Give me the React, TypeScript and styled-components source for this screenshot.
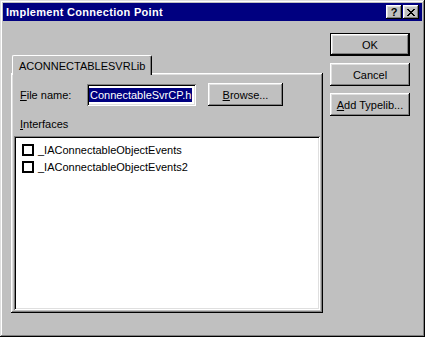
import styled, { createGlobalStyle } from 'styled-components';

const GlobalStyle = createGlobalStyle`
  html, body {
    margin: 0;
    padding: 0;
    background: #c0c0c0;
  }
  body {
    font-family: "Liberation Sans", Arial, sans-serif;
    font-size: 11px;
    color: #000;
  }
`;

const interfaces = ['_IAConnectableObjectEvents', '_IAConnectableObjectEvents2'];

const App = () => {
  return (
    <>
      <GlobalStyle />
      <Window>
        <TitleBar>
          <Title>Implement Connection Point</Title>
          <CaptionButtons>
            <CaptionButton>?</CaptionButton>
            <CaptionButton $close>
              <svg width="8" height="7" viewBox="0 0 8 7" shapeRendering="crispEdges">
                <path
                  d="M0 0h2v1H0zM6 0h2v1H6zM1 1h2v1H1zM5 1h2v1H5zM2 2h4v1H2zM3 3h2v1H3zM2 4h4v1H2zM1 5h2v1H1zM5 5h2v1H5zM0 6h2v1H0zM6 6h2v1H6z"
                  fill="#000"
                />
              </svg>
            </CaptionButton>
          </CaptionButtons>
        </TitleBar>
        <Body>
          <TabArea>
            <TabStrip>
              <Tab>ACONNECTABLESVRLib</Tab>
            </TabStrip>
            <TabPanel>
              <FieldRow>
                <FieldLabel>
                  <u>F</u>ile name:
                </FieldLabel>
                <Edit>
                  <Selection>ConnectableSvrCP.h</Selection>
                </Edit>
                <Button $width={75}>
                  <u>B</u>rowse...
                </Button>
              </FieldRow>
              <GroupLabel>
                <u>I</u>nterfaces
              </GroupLabel>
              <ListBox>
                {interfaces.map(name => (
                  <ListItem key={name}>
                    <CheckBox />
                    <span>{name}</span>
                  </ListItem>
                ))}
              </ListBox>
            </TabPanel>
          </TabArea>
          <ButtonColumn>
            <DefaultButton>OK</DefaultButton>
            <Button $width={80}>Cancel</Button>
            <Button $width={80}>
              <u>A</u>dd Typelib...
            </Button>
          </ButtonColumn>
        </Body>
      </Window>
    </>
  );
};

export default App;

const Window = styled.div`
  width: 425px;
  height: 337px;
  box-sizing: border-box;
  padding: 3px;
  background: #c0c0c0;
  box-shadow: inset -1px -1px #000, inset 1px 1px #dfdfdf, inset -2px -2px #808080,
    inset 2px 2px #fff;
  display: flex;
  flex-direction: column;
`;

const TitleBar = styled.div`
  height: 18px;
  background: #000080;
  display: flex;
  align-items: center;
  justify-content: space-between;
  padding: 0 3px 0 3px;
`;

const Title = styled.span`
  color: #fff;
  font-weight: bold;
  font-size: 11px;
  letter-spacing: 0.3px;
`;

const CaptionButtons = styled.div`
  display: flex;
  gap: 1px;
`;

const CaptionButton = styled.div<{ $close?: boolean }>`
  width: 16px;
  height: 14px;
  box-sizing: border-box;
  background: #c0c0c0;
  box-shadow: inset -1px -1px #000, inset 1px 1px #fff, inset -2px -2px #808080,
    inset 2px 2px #dfdfdf;
  display: flex;
  align-items: center;
  justify-content: center;
  font-weight: bold;
  font-size: 11px;
  line-height: 1;
  padding-top: ${p => (p.$close ? '0' : '1px')};
`;

const Body = styled.div`
  flex: 1;
  display: flex;
  align-items: flex-start;
  padding: 12px 0 0 8px;
`;

const TabArea = styled.div`
  display: flex;
  flex-direction: column;
  margin-top: 22px;
`;

const TabStrip = styled.div`
  display: flex;
  padding-left: 1px;
  margin-bottom: -2px;
  position: relative;
  z-index: 1;
`;

const Tab = styled.div`
  height: 20px;
  box-sizing: border-box;
  padding: 4px 6px 0 6px;
  background: #c0c0c0;
  border-top: 1px solid #fff;
  border-left: 1px solid #fff;
  border-right: 1px solid #000;
  border-radius: 2px 2px 0 0;
  box-shadow: inset -1px 0 #808080;
`;

const TabPanel = styled.div`
  width: 312px;
  height: 240px;
  box-sizing: border-box;
  padding: 10px 3px 3px 3px;
  box-shadow: inset -1px -1px #000, inset 1px 1px #fff, inset -2px -2px #808080,
    inset 2px 2px #dfdfdf;
  display: flex;
  flex-direction: column;
`;

const FieldRow = styled.div`
  display: flex;
  align-items: center;
  padding-left: 6px;
`;

const FieldLabel = styled.span`
  width: 67px;
`;

const Edit = styled.div`
  width: 109px;
  height: 22px;
  box-sizing: border-box;
  padding: 2px 2px;
  background: #fff;
  box-shadow: inset 1px 1px #808080, inset -1px -1px #fff, inset 2px 2px #000,
    inset -2px -2px #dfdfdf;
  overflow: hidden;
  white-space: nowrap;
  display: flex;
  align-items: center;
  margin-right: 12px;
`;

const Selection = styled.span`
  background: #000080;
  color: #fff;
  line-height: 14px;
  padding: 0 1px;
`;

const GroupLabel = styled.div`
  padding-left: 6px;
  margin-top: 12px;
  height: 14px;
`;

const ListBox = styled.div`
  flex: 1;
  margin-top: 4px;
  background: #fff;
  box-sizing: border-box;
  padding: 5px 2px 2px 8px;
  box-shadow: inset 1px 1px #808080, inset -1px -1px #fff, inset 2px 2px #000,
    inset -2px -2px #dfdfdf;
  display: flex;
  flex-direction: column;
`;

const ListItem = styled.div`
  height: 17px;
  display: flex;
  align-items: center;
  gap: 4px;
`;

const CheckBox = styled.span`
  width: 12px;
  height: 12px;
  border: 2px solid #000;
  box-sizing: border-box;
  display: inline-block;
  background: #fff;
`;

const ButtonColumn = styled.div`
  margin-left: 7px;
  display: flex;
  flex-direction: column;
  gap: 7px;
`;

const Button = styled.button<{ $width: number }>`
  width: ${p => p.$width}px;
  height: 23px;
  box-sizing: border-box;
  padding: 0;
  border: none;
  background: #c0c0c0;
  font-family: "Liberation Sans", Arial, sans-serif;
  font-size: 11px;
  color: #000;
  box-shadow: inset -1px -1px #000, inset 1px 1px #fff, inset -2px -2px #808080,
    inset 2px 2px #dfdfdf;
`;

const DefaultButton = styled(Button).attrs({ $width: 80 })`
  box-shadow: inset 0 0 0 1px #000, inset -2px -2px #000, inset 2px 2px #fff,
    inset -3px -3px #808080, inset 3px 3px #dfdfdf;
`;
